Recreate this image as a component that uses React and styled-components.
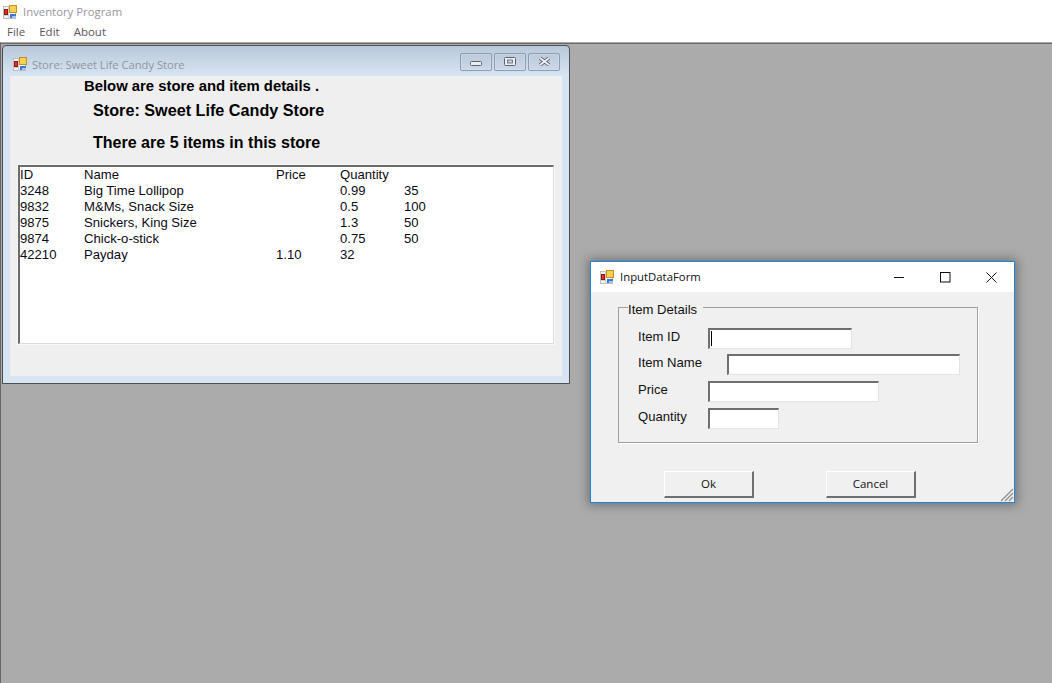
import React from "react";
import styled, { createGlobalStyle } from "styled-components";

const Global = createGlobalStyle`
  html, body { margin: 0; padding: 0; height: 100%; overflow: hidden; }
  body { font-family: "Liberation Sans", Arial, sans-serif; }
  #root { height: 683px; }
`;

const Page = styled.div`
  width: 1052px; height: 683px; display: flex; flex-direction: column; background: #fff; overflow: hidden;
`;
const AppTitle = styled.div`
  height: 22px; display: flex; align-items: center; gap: 6px; padding: 1px 0 0 3px; box-sizing: border-box;
  font: 11.35px "Open Sans", sans-serif; color: #9c939c;
`;
const AppTitleText = styled.span`margin-top: -1px;`;
const MenuBar = styled.div`
  height: 20px; display: flex; align-items: center; padding: 0 0 2px 7px; gap: 14px; box-sizing: border-box;
  font: 11.5px "Open Sans", sans-serif; color: #5a5560;
`;
const MenuItem = styled.span``;
const Desk = styled.div`
  position: relative; flex: 1; background: #ababab;
  border-top: 1px solid #a8a8a8; border-left: 1px solid #666;
  box-shadow: inset 0 1px 0 #6a6a6a;
`;

const ChildWindow = styled.div`
  position: absolute; left: 1px; top: 2px; width: 568px; height: 339px; box-sizing: border-box;
  border: 1px solid #4c4f55; border-radius: 4px 4px 0 0;
  background: linear-gradient(#b9c9da 0, #d7e4f2 30px);
  padding: 0 7px 7px 7px; display: flex; flex-direction: column;
`;
const ChildTitle = styled.div`
  height: 30px; flex: none; display: flex; align-items: center; padding: 6px 2px 0 3px; box-sizing: border-box;
  font: 11.2px "Open Sans", sans-serif; color: #8e96a0;
`;
const ChildTitleText = styled.span`flex: 1; margin-left: 5px;`;
const CaptionGroup = styled.div`
  display: flex; gap: 2px; margin-top: -4px;
`;
const Caption = styled.button`
  width: 32px; height: 18px; padding: 0 0 ${p => p.$low ? 0 : 1}px; display: flex; align-items: ${p => p.$low ? "flex-end" : "center"}; justify-content: center;
  box-sizing: border-box;
  border: 1px solid #8b9ab6; border-radius: 2px; background: linear-gradient(#bccadc, #ccd8e8);
  box-shadow: inset 0 0 0 1px rgba(255,255,255,.2);
`;
const Client = styled.div`
  flex: 1; background: #efefef; display: flex; flex-direction: column; padding: 0 8px 0 8px; min-height: 0;
`;
const Heading = styled.div`
  font-weight: 700; color: #000; font-size: ${p => p.$size}px; line-height: 20px;
  margin: ${p => p.$top}px 0 0 ${p => p.$left}px; white-space: nowrap;
`;
const List = styled.div`
  margin-top: ${p => p.$top}px; height: 179px; box-sizing: border-box; background: #fff;
  border-style: solid; border-width: 2px 1px 1px 2px; border-color: #6b6b6b #dcdcdc #dcdcdc #6b6b6b;
  outline: 1px solid #f8f8f8; outline-offset: 0;
`;
const ListRow = styled.div`
  display: grid; grid-template-columns: 64px 192px 64px 64px 1fr; height: 16px; line-height: 16px;
  font-size: 13.1px; color: #0a0a14; white-space: nowrap;
`;
const Cell = styled.span``;

const Dialog = styled.div`
  position: absolute; left: 589px; top: 218px; width: 425px; height: 242px; box-sizing: border-box;
  border: 1px solid #1c86d8; background: #f0f0f0; box-shadow: 0 0 10px 2px rgba(0,0,0,.35);
  display: flex; flex-direction: column;
`;
const DialogTitle = styled.div`
  height: 30px; flex: none; background: #fff; display: flex; align-items: center; padding-left: 9px;
  font: 11.35px "Open Sans", sans-serif; color: #111;
`;
const DialogTitleText = styled.span`flex: 1; margin: -2px 0 0 6px;`;
const WinBtn = styled.span`
  width: 46px; height: 29px; display: flex; align-items: center; justify-content: center;
`;
const GroupBox = styled.fieldset`
  margin: 8px 0 0 27px; width: 360px; height: 143px; box-sizing: border-box; padding: 13px 0 0 19px;
  border: 1px solid #a0a0a0; box-shadow: 1px 1px 0 #fff; border-radius: 0; min-inline-size: 0;
`;
const Legend = styled.legend`
  position: relative; top: 2px; margin-left: -10px; padding: 0 6px 0 0; font-size: 13.1px; color: #111; line-height: 15px;
`;
const FormRow = styled.div`
  display: flex; align-items: flex-start; height: ${p => p.$h}px;
`;
const FieldLabel = styled.label`
  width: ${p => p.$w}px; flex: none; font-size: 13.1px; color: #111; line-height: 16px; margin-top: 1px;
`;
const Field = styled.div`
  width: ${p => p.$w}px; height: 21px; box-sizing: border-box; background: #fff; position: relative;
  border-style: solid; border-width: 2px 1px 1px 2px; border-color: #6f6f6f #e4e4e4 #e4e4e4 #6f6f6f;
`;
const CaretMark = styled.span`
  position: absolute; left: 1px; top: 1px; width: 1px; height: 15px; background: #000;
`;
const Buttons = styled.div`
  display: flex; margin: 28px 0 0 73px; gap: 72px;
`;
const Btn = styled.button`
  width: 90px; height: 27px; padding: 0 0 2px; box-sizing: border-box; background: #f0f0f0;
  border-style: solid; border-width: 1px 2px 2px 1px; border-color: #fff #6f6f6f #6f6f6f #fff;
  font: 11.5px "Open Sans", sans-serif; color: #111;
`;
const Grip = styled.svg`position: absolute; right: 0; bottom: 0;`;

const AppIcon = () => (
  <svg width="14" height="14" viewBox="0 0 14 14" style={{ flex: "none" }}>
    <rect x=".5" y="1.5" width="12" height="12" fill="#f4f4f4" stroke="#bdbdbd" />
    <path d="M.5 10.5 H5 M5.5 1.5 V13.5" stroke="#cfcfcf" />
    <rect x="6" y="0" width="8" height="8" fill="#c98f18" />
    <rect x="7" y="1" width="6" height="6" fill="#fbcf55" />
    <rect x="1" y="4" width="4" height="6" fill="#8f1616" />
    <rect x="2" y="5" width="2" height="4" fill="#e5302f" />
    <rect x="7" y="9" width="6" height="4" fill="#3f78d0" />
    <rect x="9" y="11" width="4" height="2" fill="#a5c5f0" />
  </svg>
);

const rows = [
  ["ID", "Name", "Price", "Quantity", ""],
  ["3248", "Big Time Lollipop", "", "0.99", "35"],
  ["9832", "M&Ms, Snack Size", "", "0.5", "100"],
  ["9875", "Snickers, King Size", "", "1.3", "50"],
  ["9874", "Chick-o-stick", "", "0.75", "50"],
  ["42210", "Payday", "1.10", "32", ""],
];

export default function App() {
  return (
    <Page>
      <Global />
      <AppTitle><AppIcon /><AppTitleText>Inventory Program</AppTitleText></AppTitle>
      <MenuBar>
        <MenuItem>File</MenuItem>
        <MenuItem>Edit</MenuItem>
        <MenuItem>About</MenuItem>
      </MenuBar>
      <Desk>
        <ChildWindow>
          <ChildTitle>
            <AppIcon />
            <ChildTitleText>Store: Sweet Life Candy Store</ChildTitleText>
            <CaptionGroup>
              <Caption $low aria-label="Minimize">
                <svg width="12" height="5" viewBox="0 0 12 5" style={{ marginBottom: 4 }}><rect x=".5" y=".5" width="11" height="4" rx="1" fill="#eceef0" stroke="#5a6272" /></svg>
              </Caption>
              <Caption aria-label="Restore">
                <svg width="12" height="9" viewBox="0 0 12 9"><rect x=".5" y=".5" width="11" height="8" rx="1" fill="#eceef0" stroke="#5a6272" /><rect x="3.5" y="3" width="5" height="3" fill="#c5d2e2" stroke="#5a6272" strokeWidth=".8" /></svg>
              </Caption>
              <Caption aria-label="Close">
                <svg width="13" height="9" viewBox="0 0 13 9"><path d="M2 1 L11 8 M11 1 L2 8" stroke="#5b6472" strokeWidth="3.6" /><path d="M2 1 L11 8 M11 1 L2 8" stroke="#f1f2f4" strokeWidth="1.8" /></svg>
              </Caption>
            </CaptionGroup>
          </ChildTitle>
          <Client>
            <Heading $size={14.85} $left={66} $top={0}>Below are store and item details .</Heading>
            <Heading $size={16.2} $left={75} $top={4}>Store: Sweet Life Candy Store</Heading>
            <Heading $size={16.05} $left={75} $top={12}>There are 5 items in this store</Heading>
            <List $top={13}>
              {rows.map((r, i) => (
                <ListRow key={i}>
                  {r.map((c, j) => <Cell key={j}>{c}</Cell>)}
                </ListRow>
              ))}
            </List>
          </Client>
        </ChildWindow>

        <Dialog>
          <DialogTitle>
            <AppIcon />
            <DialogTitleText>InputDataForm</DialogTitleText>
            <WinBtn><svg width="11" height="11" viewBox="0 0 11 11"><path d="M0 5.5 H10" stroke="#111" /></svg></WinBtn>
            <WinBtn><svg width="11" height="11" viewBox="0 0 11 11"><rect x=".5" y=".5" width="9.5" height="9.5" fill="none" stroke="#111" /></svg></WinBtn>
            <WinBtn><svg width="11" height="11" viewBox="0 0 11 11"><path d="M.5 .5 L10.5 10.5 M10.5 .5 L.5 10.5" stroke="#111" /></svg></WinBtn>
          </DialogTitle>
          <GroupBox>
            <Legend>Item Details</Legend>
            <FormRow $h={26}>
              <FieldLabel $w={70}>Item ID</FieldLabel>
              <Field $w={144}><CaretMark /></Field>
            </FormRow>
            <FormRow $h={27}>
              <FieldLabel $w={89}>Item Name</FieldLabel>
              <Field $w={233} />
            </FormRow>
            <FormRow $h={27}>
              <FieldLabel $w={70}>Price</FieldLabel>
              <Field $w={171} />
            </FormRow>
            <FormRow $h={27}>
              <FieldLabel $w={70}>Quantity</FieldLabel>
              <Field $w={71} />
            </FormRow>
          </GroupBox>
          <Buttons>
            <Btn>Ok</Btn>
            <Btn>Cancel</Btn>
          </Buttons>
          <Grip width="14" height="14" viewBox="0 0 14 14">
            <path d="M1 13 L13 1 M5 13 L13 5 M9 13 L13 9" stroke="#8a8a8a" strokeWidth="1.2" />
          </Grip>
        </Dialog>
      </Desk>
    </Page>
  );
}
